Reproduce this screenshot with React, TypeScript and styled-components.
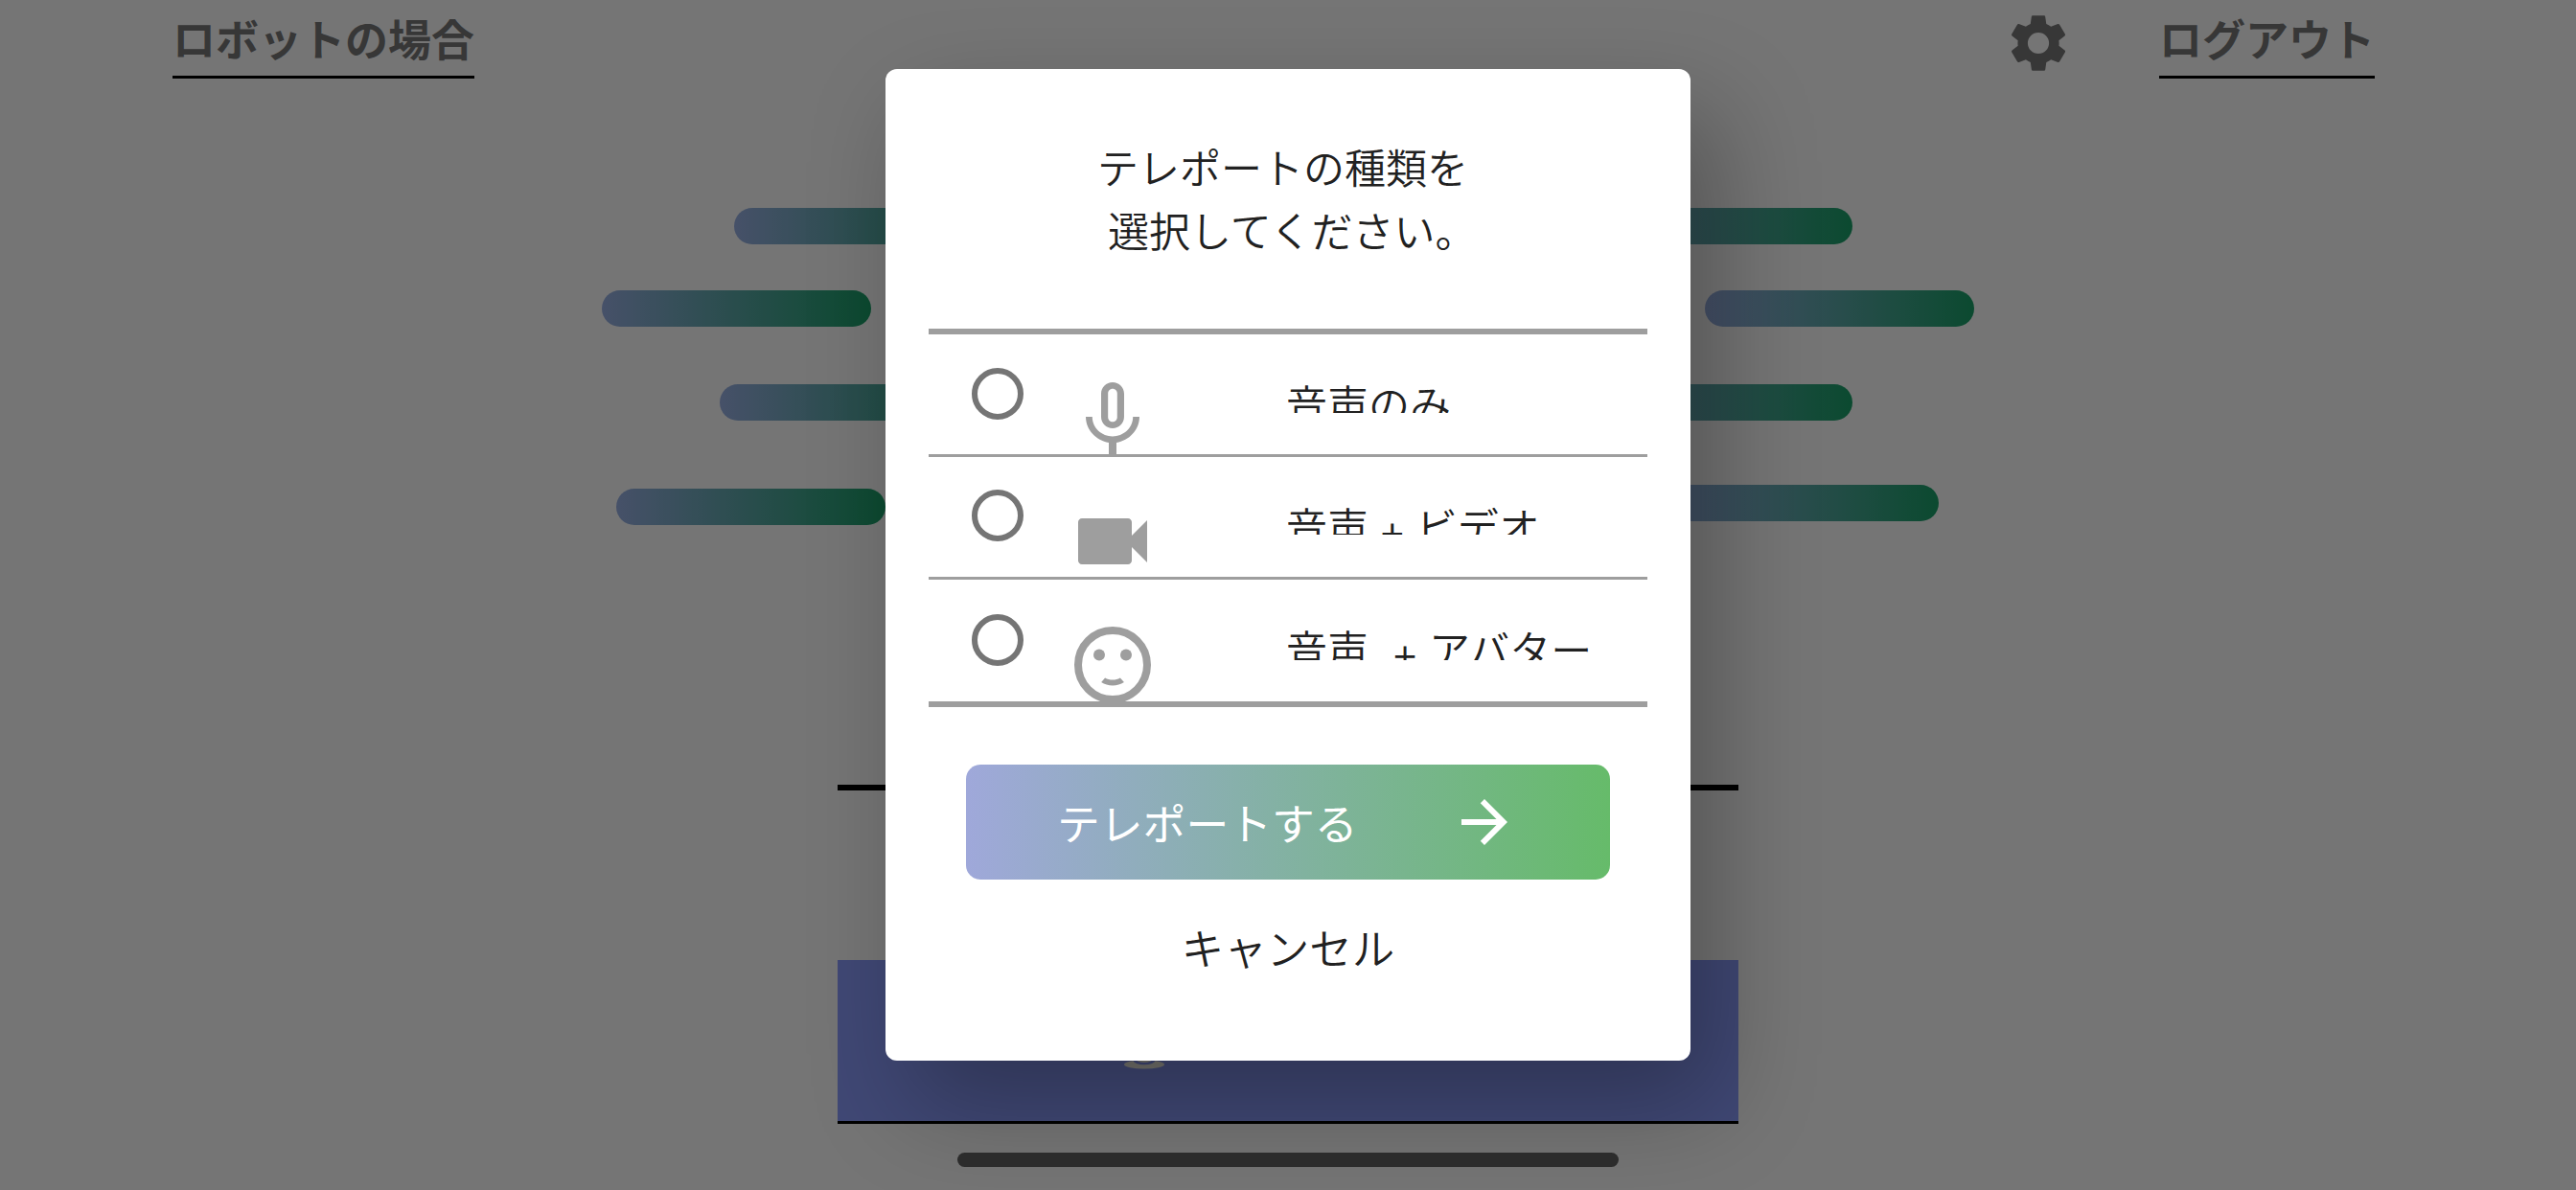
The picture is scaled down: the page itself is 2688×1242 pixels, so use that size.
import React from "react";
import styled, { createGlobalStyle } from "styled-components";

const Global = createGlobalStyle`
  * { box-sizing: border-box; }
  html, body { margin: 0; padding: 0; }
  body {
    background: #fff;
    overflow: hidden;
    font-family: "Noto Sans CJK JP", "Noto Sans", sans-serif;
  }
`;

const Screen = styled.div`
  position: relative;
  width: 2688px;
  height: 1242px;
  overflow: hidden;
`;

const Header = styled.header`
  display: flex;
  align-items: flex-start;
  height: 190px;
  padding: 0 210px 0 180px;
`;

const HeaderLink = styled.a<{ $width: number }>`
  width: ${(p) => p.$width}px;
  height: 82px;
  border-bottom: 3px solid #000;
  font-size: 45px;
  font-weight: 700;
  line-height: 80px;
  color: #787878;
  white-space: nowrap;
`;

const Gear = styled.svg`
  width: 72px;
  height: 72px;
  margin: 9px 90px 0 auto;
  fill: #787878;
`;

const BarRow = styled.div<{ $left: number; $gap: number; $drop: number; $below: number }>`
  display: flex;
  gap: ${(p) => p.$gap}px;
  height: 38px;
  margin: ${(p) => p.$drop}px 0 ${(p) => p.$below}px ${(p) => p.$left}px;
`;

const Bar = styled.span<{ $lift?: number }>`
  width: 281px;
  height: 38px;
  margin-top: ${(p) => -(p.$lift ?? 0)}px;
  border-radius: 19px;
  background: linear-gradient(90deg, #99b0e4, #1aa169);
`;

const Field = styled.section`
  width: 940px;
  margin: 271px auto 0;
`;

const FieldRule = styled.div`
  height: 6px;
  background: #000;
`;

const CallButton = styled.div`
  display: flex;
  align-items: flex-end;
  height: 171px;
  margin-top: 177px;
  padding: 0 0 54px 299px;
  background: #8c9eff;
  border-bottom: 3px solid #000;
`;

const CallIcon = styled.svg`
  width: 270px;
  height: 24px;
  fill: #fffdf2;
`;

const Scrim = styled.div`
  position: absolute;
  inset: 0;
  display: flex;
  justify-content: center;
  align-items: flex-start;
  padding-top: 72px;
  background: rgba(0, 0, 0, 0.54);
`;

const Dialog = styled.div`
  display: flex;
  flex-direction: column;
  align-items: center;
  width: 840px;
  height: 1035px;
  padding-top: 68px;
  border-radius: 12px;
  background: #fff;
  color: #212121;
  box-shadow: 27px 45px 105px 0 rgba(0, 0, 0, 0.285);
`;

const Title = styled.h2`
  display: flex;
  flex-direction: column;
  width: 402px;
  margin: 0 0 71px;
  font-size: 43px;
  font-weight: 350;
  line-height: 66px;
  white-space: nowrap;
`;

const TitleLine = styled.span<{ $indent: number }>`
  padding-left: ${(p) => p.$indent}px;
`;

const Options = styled.div`
  width: 750px;
  border-top: 6px solid #9e9e9e;
  border-bottom: 6px solid #9e9e9e;
`;

const Option = styled.div<{ $height: number }>`
  display: flex;
  height: ${(p) => p.$height}px;
  overflow: hidden;
  border-bottom: 3px solid #9e9e9e;
  &:last-child {
    border-bottom: 0;
  }
`;

const Radio = styled.span<{ $top: number }>`
  flex: none;
  width: 54px;
  height: 54px;
  margin: ${(p) => p.$top}px 45px 0 45px;
  border: 6px solid #757575;
  border-radius: 50%;
`;

const OptionIcon = styled.svg<{ $top: number }>`
  flex: none;
  width: 96px;
  height: 96px;
  margin: ${(p) => p.$top}px 133px 0 0;
  fill: #9e9e9e;
`;

const OptionLabel = styled.span<{ $clip: number }>`
  height: ${(p) => p.$clip}px;
  margin-top: 40px;
  overflow: hidden;
  font-size: 43px;
  font-weight: 350;
  line-height: 62px;
  word-spacing: 3.5px;
  white-space: pre;
`;

const Plus = styled.span`
  line-height: 0;
  vertical-align: -6px;
`;

const Submit = styled.button`
  display: flex;
  align-items: center;
  justify-content: space-between;
  width: 672px;
  height: 120px;
  margin-top: 60px;
  padding: 0 95px;
  border: 0;
  border-radius: 15px;
  background: linear-gradient(90deg, #9fa8da, #66bb6a);
  color: #fff;
  font-family: inherit;
  font-size: 44.8px;
  font-weight: 400;
  line-height: 120px;
  white-space: nowrap;
`;

const Arrow = styled.svg`
  width: 72px;
  height: 72px;
  fill: #fff;
`;

const Cancel = styled.button`
  margin-top: 36px;
  padding: 0;
  border: 0;
  background: none;
  color: #212121;
  font-family: inherit;
  font-size: 44.5px;
  font-weight: 350;
  line-height: 68px;
`;

const HomeIndicator = styled.div`
  position: absolute;
  left: 999px;
  top: 1203px;
  width: 690px;
  height: 15px;
  border-radius: 8px;
  background: #2c2c2c;
`;

const gearPath =
  "M19.14 12.94c.04-.3.06-.61.06-.94 0-.32-.02-.64-.07-.94l2.03-1.58c.18-.14.23-.41.12-.61l-1.92-3.32c-.12-.22-.37-.29-.59-.22l-2.39.96c-.5-.38-1.03-.7-1.62-.94l-.36-2.54c-.04-.24-.24-.41-.48-.41h-3.84c-.24 0-.43.17-.47.41l-.36 2.54c-.59.24-1.13.57-1.62.94l-2.39-.96c-.22-.08-.47 0-.59.22L2.74 8.87c-.12.21-.08.47.12.61l2.03 1.58c-.05.3-.07.63-.07.94s.02.64.07.94l-2.03 1.58c-.18.14-.23.41-.12.61l1.92 3.32c.12.22.37.29.59.22l2.39-.96c.5.38 1.03.7 1.62.94l.36 2.54c.05.24.24.41.48.41h3.84c.24 0 .44-.17.47-.41l.36-2.54c.59-.24 1.13-.56 1.62-.94l2.39.96c.22.08.47 0 .59-.22l1.92-3.32c.12-.22.07-.47-.12-.61l-2.03-1.58zM12 15.7a3.7 3.7 0 1 1 0-7.4 3.7 3.7 0 0 1 0 7.4z";

const options = [
  {
    text: ["音声のみ"],
    height: 128,
    radioTop: 35,
    iconTop: 42,
    clip: 42,
    icon: (
      <path d="M12 14c1.66 0 2.99-1.34 2.99-3L15 5c0-1.66-1.34-3-3-3S9 3.34 9 5v6c0 1.66 1.34 3 3 3zm-1.2-9.1c0-.66.54-1.2 1.2-1.2s1.2.54 1.2 1.2l-.01 6.2c0 .66-.53 1.2-1.19 1.2s-1.2-.54-1.2-1.2V4.9zm6.5 6.1c0 3-2.54 5.1-5.3 5.1S6.7 14 6.7 11H5c0 3.41 2.72 6.23 6 6.72V21h2v-3.28c3.28-.48 6-3.3 6-6.72h-1.7z" />
    ),
  },
  {
    text: ["音声 ", " ビデオ"],
    height: 128,
    radioTop: 34,
    iconTop: 40,
    clip: 41,
    icon: (
      <path d="M17 10.5V7c0-.55-.45-1-1-1H4c-.55 0-1 .45-1 1v10c0 .55.45 1 1 1h12c.55 0 1-.45 1-1v-3.500l4 4v-11l-4 4z" />
    ),
  },
  {
    text: ["音声  ", " アバター"],
    height: 127,
    radioTop: 36,
    iconTop: 41,
    clip: 44,
    icon: (
      <>
        <circle cx="12" cy="12" r="9" fill="none" stroke="#9e9e9e" strokeWidth="2" />
        <circle cx="8.500" cy="9.400" r="1.500" />
        <circle cx="15.500" cy="9.400" r="1.500" />
        <path d="M12 15.900c-.73 0-1.380-.18-1.960-.52-.12.140-.86.980-1.010 1.150.86.550 1.870.870 2.970.870 1.110 0 2.120-.33 2.980-.88l-1.010-1.150c-.59.350-1.240.530-1.970.530z" />
      </>
    ),
  },
];

export default function App() {
  return (
    <>
      <Global />
      <Screen>
        <Header>
          <HeaderLink $width={315}>ロボットの場合</HeaderLink>
          <Gear viewBox="0 0 24 24">
            <path d={gearPath} />
          </Gear>
          <HeaderLink $width={225}>ログアウト</HeaderLink>
        </Header>
        <BarRow $left={766} $gap={605} $drop={27} $below={48}>
          <Bar />
          <Bar />
        </BarRow>
        <BarRow $left={628} $gap={870} $drop={0} $below={60}>
          <Bar />
          <Bar />
        </BarRow>
        <BarRow $left={751} $gap={620} $drop={0} $below={71}>
          <Bar />
          <Bar />
        </BarRow>
        <BarRow $left={643} $gap={818} $drop={0} $below={0}>
          <Bar />
          <Bar $lift={4} />
        </BarRow>
        <Field>
          <FieldRule />
          <CallButton>
            <CallIcon viewBox="0 0 270 24">
              <ellipse cx="21" cy="19" rx="21" ry="4.600" />
              <ellipse cx="21" cy="15" rx="11.500" ry="4.200" fill="#8c9eff" />
              <ellipse cx="21" cy="13" rx="9" ry="4" />
            </CallIcon>
          </CallButton>
        </Field>
        <Scrim>
          <Dialog>
            <Title>
              <TitleLine $indent={2}>テレポートの種類を</TitleLine>
              <TitleLine $indent={13}>選択してください。</TitleLine>
            </Title>
            <Options>
              {options.map((o) => (
                <Option key={o.text.join("+")} $height={o.height}>
                  <Radio $top={o.radioTop} />
                  <OptionIcon $top={o.iconTop} viewBox="0 0 24 24">
                    {o.icon}
                  </OptionIcon>
                  <OptionLabel $clip={o.clip}>
                    {o.text[0]}
                    {o.text[1] && <Plus>+</Plus>}
                    {o.text[1]}
                  </OptionLabel>
                </Option>
              ))}
            </Options>
            <Submit>
              テレポートする
              <Arrow viewBox="0 0 24 24">
                <path d="M12 4l-1.410 1.410L16.170 11H4v2h12.170l-5.580 5.590L12 20l8-8z" />
              </Arrow>
            </Submit>
            <Cancel>キャンセル</Cancel>
          </Dialog>
        </Scrim>
        <HomeIndicator />
      </Screen>
    </>
  );
}
